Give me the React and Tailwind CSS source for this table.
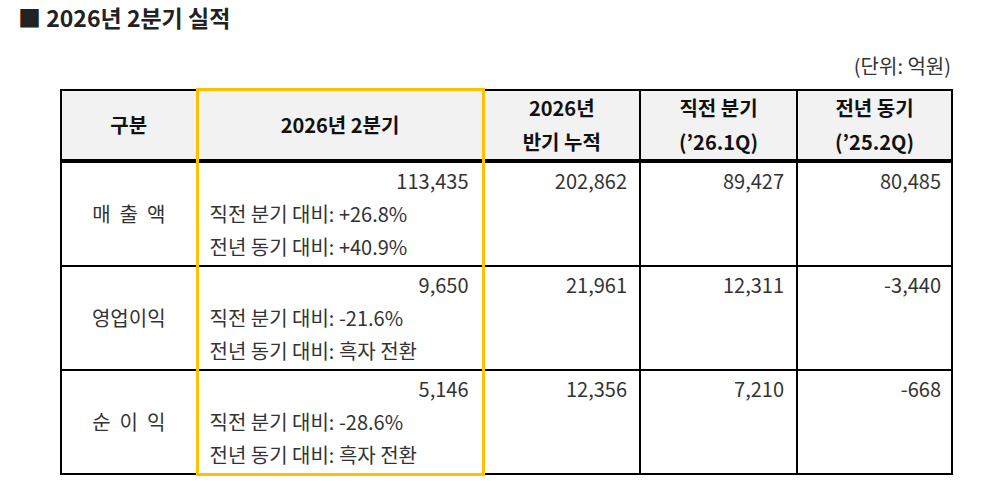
import React from "react";

const rows = [
  {
    label: "매  출  액",
    value: "113,435",
    qoq: "직전 분기 대비: +26.8%",
    yoy: "전년 동기 대비: +40.9%",
    half: "202,862",
    prev: "89,427",
    last: "80,485",
  },
  {
    label: "영업이익",
    value: "9,650",
    qoq: "직전 분기 대비: -21.6%",
    yoy: "전년 동기 대비: 흑자 전환",
    half: "21,961",
    prev: "12,311",
    last: "-3,440",
  },
  {
    label: "순  이  익",
    value: "5,146",
    qoq: "직전 분기 대비: -28.6%",
    yoy: "전년 동기 대비: 흑자 전환",
    half: "12,356",
    prev: "7,210",
    last: "-668",
  },
];

const App = () => {
  return (
    <div
      className="w-[994px] h-[481px] bg-white px-[18px] pt-[1px] overflow-hidden"
      style={{ fontFamily: '"Noto Sans CJK KR", "Noto Sans", sans-serif' }}
    >
      {/* Title */}
      <h3 className="text-[23px] font-bold leading-[32px] text-[#222]">
        ■ 2026년 2분기 실적
      </h3>

      <div className="ml-[42px] w-[891px] mt-[20px]">
        <p className="text-right text-[20px] leading-[26px] text-[#333] mb-[9px]">(단위: 억원)</p>

        {/* Results table */}
        <table className="w-[891px] table-fixed border-collapse text-[20px] text-[#333]">
          <colgroup>
            <col className="w-[136px]" />
            <col className="w-[286px]" />
            <col className="w-[157px]" />
            <col className="w-[157px]" />
            <col className="w-[155px]" />
          </colgroup>
          <thead>
            <tr className="h-[68px] bg-[#f2f2f2] text-[#111] font-bold leading-[34px]">
              <th className="border-2 border-black font-bold">구분</th>
              <th className="border-[3px] border-b-2 border-[#ffc000] border-b-black font-bold">2026년 2분기</th>
              <th className="border-2 border-black font-bold">
                2026년
                <br />
                반기 누적
              </th>
              <th className="border-2 border-black font-bold">
                직전 분기
                <br />
                (’26.1Q)
              </th>
              <th className="border-2 border-black font-bold">
                전년 동기
                <br />
                (’25.2Q)
              </th>
            </tr>
            <tr className="h-px">
              <td className="h-px p-0 border-x-2 border-b border-black"></td>
              <td className="h-px p-0 border-x-[3px] border-[#ffc000] border-b border-b-black"></td>
              <td className="h-px p-0 border-x-2 border-b border-black"></td>
              <td className="h-px p-0 border-x-2 border-b border-black"></td>
              <td className="h-px p-0 border-x-2 border-b border-black"></td>
            </tr>
          </thead>
          <tbody>
            {rows.map((r, i) => {
              const lastRow = i === rows.length - 1;
              return (
                <tr key={r.value} className="leading-[33px] align-top">
                  <td className="border-2 border-black text-center align-middle whitespace-pre">{r.label}</td>
                  <td
                    className={
                      lastRow
                        ? "border-2 border-x-[3px] border-b-[3px] border-x-[#ffc000] border-t-black border-b-[#ffc000] pl-[11px] pr-[13px] pt-[1px] pb-[2px]"
                        : "border-2 border-x-[3px] border-x-[#ffc000] border-y-black pl-[11px] pr-[13px] pt-[1px] pb-[2px]"
                    }
                  >
                    <div className="text-right">{r.value}</div>
                    <div>{r.qoq}</div>
                    <div>{r.yoy}</div>
                  </td>
                  <td className="border-2 border-black text-right pr-[12px] pt-[1px]">{r.half}</td>
                  <td className="border-2 border-black text-right pr-[12px] pt-[1px]">{r.prev}</td>
                  <td className="border-2 border-black text-right pr-[10px] pt-[1px]">{r.last}</td>
                </tr>
              );
            })}
          </tbody>
        </table>
      </div>
    </div>
  );
};

export default App;
